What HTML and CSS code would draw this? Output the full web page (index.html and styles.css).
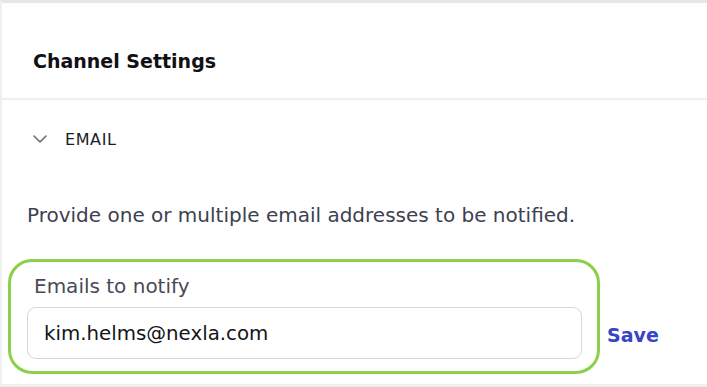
FILE: index.html
```html
<!DOCTYPE html>
<html>
<head>
<meta charset="utf-8">
<link rel="stylesheet" href="styles.css">
</head>
<body>
<div class="panel">
  <div class="header">
    <h2 class="title">Channel Settings</h2>
  </div>
  <div class="section">
    <div class="toggle">
      <svg class="chev" width="14" height="8" viewBox="0 0 14 8"><path d="M1 1 L7 7 L13 1" fill="none" stroke="#6b6b6b" stroke-width="1.6" stroke-linecap="round" stroke-linejoin="round"/></svg>
      <span class="toggle-label">EMAIL</span>
    </div>
    <p class="desc">Provide one or multiple email addresses to be notified.</p>
    <div class="row">
      <div class="highlight">
        <div class="field-label">Emails to notify</div>
        <div class="input">kim.helms@nexla.com</div>
      </div>
      <a class="save">Save</a>
    </div>
  </div>
</div>
</body>
</html>
```

FILE: styles.css
```css
html, body {
  margin: 0;
  padding: 0;
  background: #ffffff;
}
body {
  font-family: "DejaVu Sans", Inter, sans-serif;
  color: #1f1f24;
}
.panel {
  width: 707px;
  height: 387px;
  box-sizing: border-box;
  border-top: 3px solid #e6e6e6;
  border-left: 2px solid #f0f0f0;
  border-bottom: 3px solid #efefef;
  overflow: hidden;
}
.header {
  height: 97px;
  box-sizing: border-box;
  padding: 47px 0 0 31px;
  border-bottom: 2px solid #efefef;
}
.title {
  margin: 0;
  font-size: 19px;
  font-weight: 600;
  line-height: 22px;
  color: #111114;
}
.section {
  padding: 0 0 0 6px;
}
.toggle {
  display: flex;
  align-items: center;
  height: 22px;
  margin-top: 28px;
  padding-left: 25px;
}
.chev {
  display: block;
}
.toggle-label {
  margin-left: 18px;
  font-size: 16px;
  letter-spacing: 0.6px;
  color: #1c1c24;
}
.desc {
  margin: 54px 0 0 19px;
  font-size: 20px;
  line-height: 22px;
  color: #3d4150;
}
.row {
  display: flex;
  align-items: flex-end;
  margin-top: 33px;
}
.highlight {
  width: 592px;
  height: 115px;
  box-sizing: border-box;
  border: 3.5px solid #8ccf4a;
  border-radius: 24px;
  padding: 14px 15px 0 16px;
}
.field-label {
  font-size: 20px;
  line-height: 20px;
  color: #4a4a55;
  padding-left: 7px;
}
.input {
  margin-top: 11px;
  height: 52px;
  box-sizing: border-box;
  border: 1.5px solid #d3d6dc;
  border-radius: 9px;
  padding: 0 0 0 16px;
  display: flex;
  align-items: center;
  font-size: 19.8px;
  color: #141418;
}
.save {
  margin: 0 0 28px 7px;
  line-height: 22px;
  font-size: 19px;
  font-weight: 700;
  color: #3a44c6;
}
```
